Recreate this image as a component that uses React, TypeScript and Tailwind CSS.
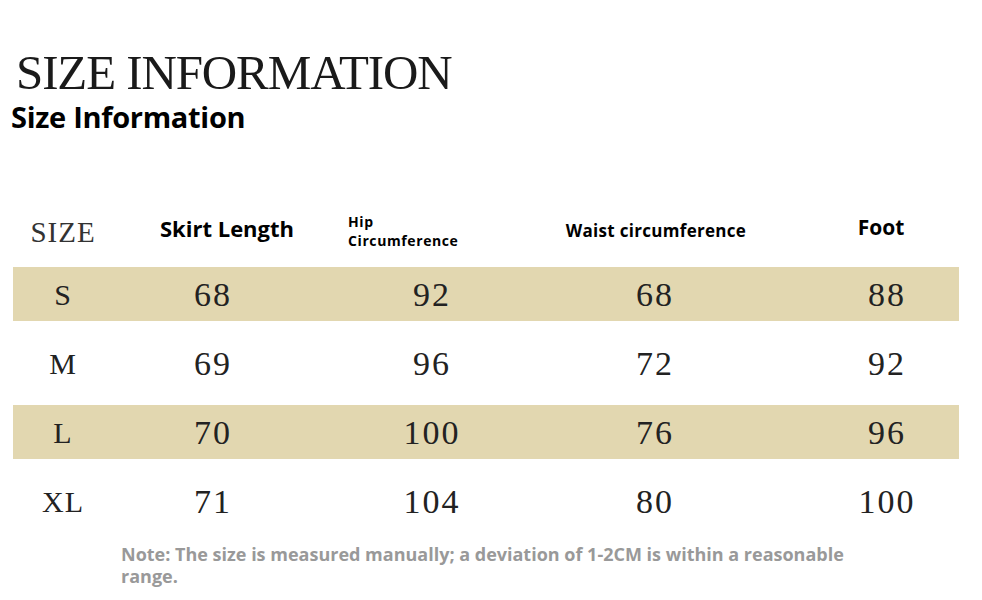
import React from "react";

const rows = [
  { s: "S", v: ["68", "92", "68", "88"], band: true },
  { s: "M", v: ["69", "96", "72", "92"], band: false },
  { s: "L", v: ["70", "100", "76", "96"], band: true },
  { s: "XL", v: ["71", "104", "80", "100"], band: false },
];

const serif = "font-['Liberation_Serif',serif]";

export default function App() {
  return (
    <div className="w-[982px] h-[600px] bg-white overflow-hidden text-black">
      <div className="pt-[47px] pl-[16px]">
        <div className={`${serif} text-[49px] leading-[52px] tracking-[-1.1px] text-[#1a1a1a] font-normal`}>
          SIZE INFORMATION
        </div>
        <div className="font-['Open_Sans',sans-serif] font-bold text-[29px] leading-[34px] -ml-[5px] mt-[1px] tracking-[-0.3px]">
          Size Information
        </div>
      </div>

      <div className="mt-[64px] ml-[13px] w-[946px]">
        {/* header */}
        <div className="h-[69px] grid grid-cols-[100px_200px_238px_208px_200px] items-center font-['Open_Sans',sans-serif] font-bold pb-[4px]">
          <div className={`${serif} font-normal text-[29px] text-[#333] text-center tracking-[1px] pt-[4px]`}>SIZE</div>
          <div className="text-[22px] text-center pl-[28px] pb-[4px]">Skirt Length</div>
          <div className="text-[14px] leading-[19px] pl-[35px] tracking-[0.6px] flex flex-col">
            <span>Hip</span>
            <span>Circumference</span>
          </div>
          <div className="text-[17px] text-center tracking-[0.3px] pl-[2px]">Waist circumference</div>
          <div className="text-[21px] text-center pl-[44px] pb-[6px]">Foot</div>
        </div>
        {rows.map((r) => (
          <div
            key={r.s}
            className={`grid grid-cols-[100px_200px_238px_208px_200px] items-center ${serif} text-[34px] tracking-[2px] text-[#222] ${
              r.band ? "h-[54px] bg-[#e2d7b0]" : "h-[84px]"
            }`}
          >
            <div className="text-center text-[30px] tracking-[1px]">{r.s}</div>
            {r.v.map((x, i) => (
              <div key={i} className={`text-center ${i === 3 ? "pl-[56px]" : ""}`}>
                {x}
              </div>
            ))}
          </div>
        ))}
      </div>

      <div className="ml-[121px] mt-[0px] w-[740px] font-['Open_Sans',sans-serif] font-bold text-[18px] leading-[22px] text-[#999999]">
        Note: The size is measured manually; a deviation of 1-2CM is within a reasonable range.
      </div>
    </div>
  );
}
